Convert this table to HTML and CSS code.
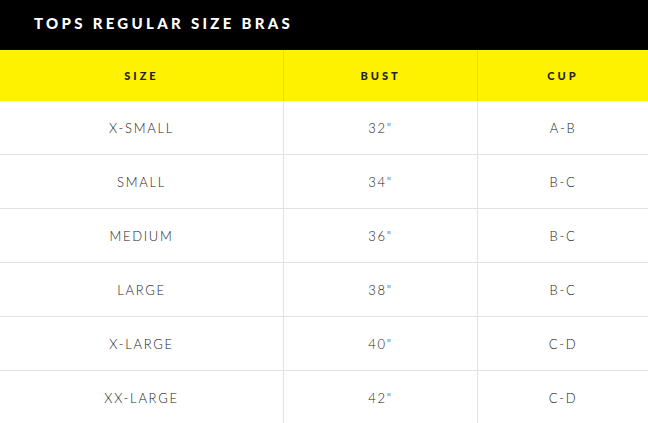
FILE: index.html
```html
<!DOCTYPE html>
<html>
<head>
<meta charset="utf-8">
<link rel="stylesheet" href="styles.css">
</head>
<body>
<div class="chart">
  <div class="title">TOPS REGULAR SIZE BRAS</div>
  <div class="grid">
    <div class="cell head">SIZE</div>
    <div class="cell head">BUST</div>
    <div class="cell head">CUP</div>
    <div class="cell">X-SMALL</div><div class="cell">32"</div><div class="cell">A-B</div>
    <div class="cell">SMALL</div><div class="cell">34"</div><div class="cell">B-C</div>
    <div class="cell">MEDIUM</div><div class="cell">36"</div><div class="cell">B-C</div>
    <div class="cell">LARGE</div><div class="cell">38"</div><div class="cell">B-C</div>
    <div class="cell">X-LARGE</div><div class="cell">40"</div><div class="cell">C-D</div>
    <div class="cell">XX-LARGE</div><div class="cell">42"</div><div class="cell">C-D</div>
  </div>
</div>
</body>
</html>
```
FILE: styles.css
```css
html, body { margin: 0; padding: 0; background: #fff; }
body { font-family: "Lato", "Liberation Sans", sans-serif; }
.chart { width: 648px; }
.title {
  height: 50px;
  background: #000;
  color: #fff;
  font-weight: 900;
  font-size: 15px;
  letter-spacing: 3.3px;
  line-height: 46px;
  padding-left: 34px;
}
.grid {
  display: grid;
  grid-template-columns: 283px 194px 1fr;
  grid-template-rows: 51px;
  grid-auto-rows: 54px;
}
.grid .cell {
  display: flex;
  align-items: center;
  justify-content: center;
  border-left: 1px solid #e2e2e2;
  border-bottom: 1px solid #e2e2e2;
  font-size: 13px;
  font-weight: 300;
  letter-spacing: 1.7px;
  color: #222;
  box-sizing: border-box;
  padding-top: 1px;
}
.grid .cell:nth-child(3n+1) { border-left: none; }
.grid .cell.head {
  background: #fff200;
  font-weight: 900;
  font-size: 11px;
  letter-spacing: 3px;
  color: #222;
  border-bottom: none;
  padding-top: 0;
}
.grid .cell.head:nth-child(2), .grid .cell.head:nth-child(3) { border-left-color: #e8dc00; }
```
